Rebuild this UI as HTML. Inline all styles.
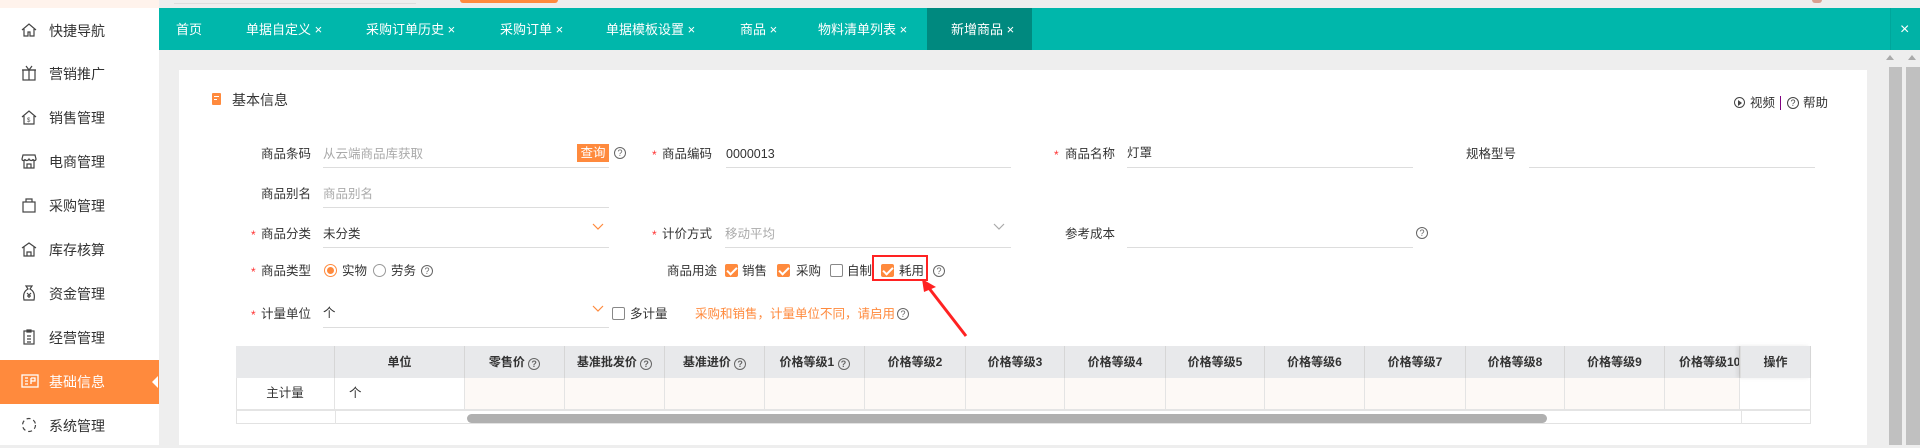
<!DOCTYPE html>
<html><head><meta charset="utf-8"><style>
*{margin:0;padding:0;box-sizing:border-box}
body{width:1920px;height:445px;overflow:hidden;background:#eee;font-family:"Liberation Sans","Noto Sans CJK SC",sans-serif;font-size:13px;color:#333;position:relative}
.a{position:absolute;white-space:nowrap;line-height:18px}
.side{left:0;top:0;width:159px;height:445px;background:#fff}
.si{left:0;width:159px;height:44px;line-height:44px;font-size:14px;color:#333}
.si span{position:absolute;left:49px}
.si svg{position:absolute;left:21px;top:13px}
.tabbar{left:159px;top:8px;width:1761px;height:42px;background:#00b7ab}
.tab{top:8px;height:42px;line-height:44px;color:#fff;font-size:13px}
.lbl{font-size:12.5px;color:#333}
.st{color:#f33;font-size:12px}
.line{height:1px;background:#ddd}
.ph{color:#aaa;font-size:12.5px}
.q{width:12px;height:12px;border:1px solid #666;border-radius:50%;font-size:9px;line-height:10px;text-align:center;color:#666}
.cb{width:13px;height:13px;border-radius:2px}
.cbo{background:#ff8a3d}
.cbe{border:1px solid #888;background:#fff}
.cbo:after{content:"";position:absolute;left:4px;top:1px;width:4px;height:8px;border:solid #fff;border-width:0 2px 2px 0;transform:rotate(45deg)}
.th{top:346px;height:32px;line-height:32px;text-align:center;font-weight:bold;font-size:12px;color:#333;background:#e8e9eb;border-right:1px solid #d6d6d6}
.td{top:378px;height:31px;background:#fdf9f6;border-right:1px solid #e4e4e4}
</style></head><body>
<div class="a" style="left:0;top:0;width:159px;height:8px;background:#fff3ec"></div>
<div class="a" style="left:174px;top:3px;width:242px;height:1px;background:#ddd"></div>
<div class="a" style="left:460px;top:0;width:98px;height:3px;background:#ff8a3d;border-radius:0 0 3px 3px"></div>
<div class="a" style="left:1812px;top:0;width:10px;height:3px;background:#d9a090;border-radius:0 0 5px 5px"></div>
<div class="a side" style="top:8px;height:437px"></div>
<div class="a si" style="top:9px"><svg width="16" height="16" viewBox="0 0 16 16" fill="none" stroke="#444" stroke-width="1.2"><path d="M1 8L8 2l7 6M3 7v7h4v-4h2v4h4V7"/></svg><span>快捷导航</span></div>
<div class="a si" style="top:52px"><svg width="16" height="16" viewBox="0 0 16 16" fill="none" stroke="#444" stroke-width="1.2"><rect x="2" y="5" width="12" height="10"/><path d="M1 5h14M8 5v10M5 1l3 4 3-4"/></svg><span>营销推广</span></div>
<div class="a si" style="top:96px"><svg width="16" height="16" viewBox="0 0 16 16" fill="none" stroke="#444" stroke-width="1.2"><path d="M1 8L8 2l7 6M3 7v8h10V7"/><text x="6" y="13" font-size="6" fill="#444" stroke="none">$</text></svg><span>销售管理</span></div>
<div class="a si" style="top:140px"><svg width="16" height="16" viewBox="0 0 16 16" fill="none" stroke="#444" stroke-width="1.2"><path d="M2 2h12l1 4c0 2-3 2-3 0 0 2-3 2-4 0-1 2-4 2-4 0 0 2-3 2-3 0zM3 8v7h10V8M6 15v-4h4v4"/></svg><span>电商管理</span></div>
<div class="a si" style="top:184px"><svg width="16" height="16" viewBox="0 0 16 16" fill="none" stroke="#444" stroke-width="1.2"><rect x="2" y="5" width="12" height="10"/><path d="M5 5V2h6v3"/></svg><span>采购管理</span></div>
<div class="a si" style="top:228px"><svg width="16" height="16" viewBox="0 0 16 16" fill="none" stroke="#444" stroke-width="1.2"><path d="M1 7L8 2l7 5M3 6v9h10V6M6 15v-4h4v4"/></svg><span>库存核算</span></div>
<div class="a si" style="top:272px"><svg width="16" height="16" viewBox="0 0 16 16" fill="none" stroke="#444" stroke-width="1.2"><path d="M5 1h6l-2 3c4 2 5 6 4 11H3C2 10 3 6 7 4z"/><path d="M6 8l2 2 2-2M8 10v3M6 11h4"/></svg><span>资金管理</span></div>
<div class="a si" style="top:316px"><svg width="16" height="16" viewBox="0 0 16 16" fill="none" stroke="#444" stroke-width="1.2"><rect x="3" y="2" width="10" height="13"/><path d="M6 1h4v2H6zM6 7h4M6 10h4M6 13h4"/></svg><span>经营管理</span></div>
<div class="a" style="left:0;top:360px;width:159px;height:44px;background:#ff8a3d"></div>
<div class="a" style="left:152px;top:376px;width:0;height:0;border:6px solid transparent;border-right-color:#fff;border-left:0"></div>
<div class="a si" style="top:360px;color:#fff"><svg width="18" height="16" viewBox="0 0 18 16" fill="none" stroke="#fff" stroke-width="1.3"><rect x="1" y="2" width="16" height="12"/><path d="M4 5h3M4 8h3M4 11h3M10 5v6M10 5h4v3h-4"/></svg><span>基础信息</span></div>
<div class="a si" style="top:404px"><svg width="16" height="16" viewBox="0 0 16 16" fill="none" stroke="#444" stroke-width="1.2" stroke-dasharray="4 3"><circle cx="8" cy="8" r="6.5"/></svg><span>系统管理</span></div>

<div class="a tabbar"></div>
<div class="a" style="left:927px;top:8px;width:105px;height:42px;background:#00897f"></div>
<div class="a" style="left:1890px;top:8px;width:30px;height:42px;background:#00b2a6;border-left:1px solid #00a69b"></div>
<div class="a tab" style="left:176px">首页</div>
<div class="a tab" style="left:246px">单据自定义 ×</div>
<div class="a tab" style="left:366px">采购订单历史 ×</div>
<div class="a tab" style="left:500px">采购订单 ×</div>
<div class="a tab" style="left:606px">单据模板设置 ×</div>
<div class="a tab" style="left:740px">商品 ×</div>
<div class="a tab" style="left:818px">物料清单列表 ×</div>
<div class="a tab" style="left:951px">新增商品 ×</div>
<div class="a tab" style="left:1900px;font-size:16px">×</div>

<div class="a" style="left:1886px;top:55px;border:4px solid transparent;border-bottom:5px solid #aaa;border-top:0"></div>
<div class="a" style="left:1908px;top:55px;border:4px solid transparent;border-bottom:5px solid #aaa;border-top:0"></div>
<div class="a" style="left:1889px;top:67px;width:13px;height:378px;background:#c0c0c0"></div>
<div class="a" style="left:1906px;top:67px;width:14px;height:378px;background:#c0c0c0"></div>

<div class="a" style="left:179px;top:70px;width:1688px;height:375px;background:#fff"></div>
<div class="a" style="left:212px;top:93px;width:9px;height:12px;background:#ff8a3d;border-radius:1px"></div>
<div class="a" style="left:214px;top:96px;width:5px;height:1px;background:#fff"></div>
<div class="a" style="left:214px;top:99px;width:3px;height:1px;background:#fff"></div>
<div class="a" style="left:232px;top:91px;font-size:14px;color:#333">基本信息</div>
<div class="a" style="left:1734px;top:97px;width:11px;height:11px;border:1px solid #444;border-radius:50%"></div>
<div class="a" style="left:1738px;top:100px;border:3px solid transparent;border-left:4px solid #444;border-right:0"></div>
<div class="a" style="left:1750px;top:94px;font-size:12.5px">视频</div>
<div class="a" style="left:1780px;top:96px;width:1px;height:14px;background:#800080"></div>
<div class="a q" style="left:1787px;top:97px;border-color:#444;color:#444">?</div>
<div class="a" style="left:1803px;top:94px;font-size:12.5px">帮助</div>

<div class="a lbl" style="left:261px;top:145px">商品条码</div>
<div class="a ph" style="left:323px;top:145px">从云端商品库获取</div>
<div class="a" style="left:577px;top:144px;width:32px;height:18px;background:#ff8a3d;color:#fff;font-size:12.5px;line-height:18px;text-align:center">查询</div>
<div class="a line" style="left:323px;top:167px;width:286px"></div>
<div class="a q" style="left:614px;top:147px">?</div>
<div class="a st" style="left:652px;top:146px">*</div>
<div class="a lbl" style="left:662px;top:145px">商品编码</div>
<div class="a lbl" style="left:726px;top:145px">0000013</div>
<div class="a line" style="left:726px;top:167px;width:285px"></div>
<div class="a st" style="left:1054px;top:146px">*</div>
<div class="a lbl" style="left:1065px;top:145px">商品名称</div>
<div class="a lbl" style="left:1127px;top:144px">灯罩</div>
<div class="a line" style="left:1127px;top:167px;width:286px"></div>
<div class="a lbl" style="left:1466px;top:145px">规格型号</div>
<div class="a line" style="left:1529px;top:167px;width:286px"></div>
<div class="a lbl" style="left:261px;top:185px">商品别名</div>
<div class="a ph" style="left:323px;top:185px">商品别名</div>
<div class="a line" style="left:323px;top:207px;width:286px"></div>
<div class="a st" style="left:251px;top:226px">*</div>
<div class="a lbl" style="left:261px;top:225px">商品分类</div>
<div class="a lbl" style="left:323px;top:225px">未分类</div>
<svg class="a" style="left:592px;top:223px" width="12" height="8"><path d="M1 1l5 5 5-5" fill="none" stroke="#ff8a3d" stroke-width="1.2"/></svg>
<div class="a line" style="left:323px;top:247px;width:286px"></div>
<div class="a st" style="left:652px;top:226px">*</div>
<div class="a lbl" style="left:662px;top:225px">计价方式</div>
<div class="a ph" style="left:725px;top:225px">移动平均</div>
<svg class="a" style="left:993px;top:223px" width="12" height="8"><path d="M1 1l5 5 5-5" fill="none" stroke="#aaa" stroke-width="1.2"/></svg>
<div class="a line" style="left:725px;top:247px;width:286px"></div>
<div class="a lbl" style="left:1065px;top:225px">参考成本</div>
<div class="a line" style="left:1127px;top:247px;width:286px"></div>
<div class="a q" style="left:1416px;top:227px">?</div>
<div class="a st" style="left:251px;top:263px">*</div>
<div class="a lbl" style="left:261px;top:262px">商品类型</div>
<div class="a" style="left:324px;top:264px;width:13px;height:13px;border:1px solid #ff8a3d;border-radius:50%"></div>
<div class="a" style="left:327px;top:267px;width:7px;height:7px;background:#ff8a3d;border-radius:50%"></div>
<div class="a lbl" style="left:342px;top:262px">实物</div>
<div class="a" style="left:373px;top:264px;width:13px;height:13px;border:1px solid #999;border-radius:50%"></div>
<div class="a lbl" style="left:391px;top:262px">劳务</div>
<div class="a q" style="left:421px;top:265px">?</div>
<div class="a lbl" style="left:667px;top:262px">商品用途</div>
<div class="a cb cbo" style="left:725px;top:264px"></div><div class="a lbl" style="left:742px;top:262px">销售</div>
<div class="a cb cbo" style="left:777px;top:264px"></div><div class="a lbl" style="left:796px;top:262px">采购</div>
<div class="a cb cbe" style="left:830px;top:264px"></div><div class="a lbl" style="left:847px;top:262px">自制</div>
<div class="a cb cbo" style="left:881px;top:264px"></div><div class="a lbl" style="left:899px;top:262px">耗用</div>
<div class="a q" style="left:933px;top:265px">?</div>
<div class="a" style="left:872px;top:255px;width:56px;height:26px;border:2px solid #f22"></div>
<svg class="a" style="left:900px;top:270px" width="80" height="75"><path d="M66 66L25 13" stroke="#f22" stroke-width="3"/><path d="M22 9l14 8-12 5z" fill="#f22"/></svg>
<div class="a st" style="left:251px;top:306px">*</div>
<div class="a lbl" style="left:261px;top:305px">计量单位</div>
<div class="a lbl" style="left:323px;top:304px">个</div>
<svg class="a" style="left:592px;top:305px" width="12" height="8"><path d="M1 1l5 5 5-5" fill="none" stroke="#ff8a3d" stroke-width="1.2"/></svg>
<div class="a line" style="left:323px;top:327px;width:286px"></div>
<div class="a cb cbe" style="left:612px;top:307px"></div>
<div class="a lbl" style="left:630px;top:305px">多计量</div>
<div class="a" style="left:695px;top:305px;color:#ff8a3d;font-size:12.5px">采购和销售，计量单位不同，请启用</div>
<div class="a q" style="left:897px;top:308px">?</div>
<div class="a" style="left:236px;top:346px;width:1575px;height:78px;border:1px solid #e2e2e2;border-top:0;background:#fff"></div>
<div class="a th" style="left:236px;width:99px"></div>
<div class="a th" style="left:335px;width:130px">单位</div>
<div class="a th" style="left:465px;width:100px">零售价 <span class="q" style="display:inline-block;position:relative;top:1px">?</span></div>
<div class="a th" style="left:565px;width:100px">基准批发价 <span class="q" style="display:inline-block;position:relative;top:1px">?</span></div>
<div class="a th" style="left:665px;width:100px">基准进价 <span class="q" style="display:inline-block;position:relative;top:1px">?</span></div>
<div class="a th" style="left:765px;width:100px">价格等级1 <span class="q" style="display:inline-block;position:relative;top:1px">?</span></div>
<div class="a th" style="left:865px;width:101px">价格等级2</div>
<div class="a th" style="left:966px;width:99px">价格等级3</div>
<div class="a th" style="left:1065px;width:101px">价格等级4</div>
<div class="a th" style="left:1166px;width:99px">价格等级5</div>
<div class="a th" style="left:1265px;width:100px">价格等级6</div>
<div class="a th" style="left:1365px;width:101px">价格等级7</div>
<div class="a th" style="left:1466px;width:99px">价格等级8</div>
<div class="a th" style="left:1565px;width:100px">价格等级9</div>
<div class="a th" style="left:1665px;width:75px;overflow:hidden;text-align:left;padding-left:14px">价格等级10</div>
<div class="a th" style="left:1740px;width:71px;border-left:1px solid #ddd;box-shadow:-3px 0 4px rgba(0,0,0,.08)">操作</div>
<div class="a" style="left:236px;top:378px;width:99px;height:31px;border-right:1px solid #e4e4e4;text-align:center;line-height:31px;font-size:12.5px">主计量</div>
<div class="a" style="left:335px;top:378px;width:130px;height:31px;border-right:1px solid #e4e4e4;line-height:31px;padding-left:14px;font-size:12.5px">个</div>
<div class="a td" style="left:465px;width:100px"></div><div class="a td" style="left:565px;width:100px"></div>
<div class="a td" style="left:665px;width:100px"></div><div class="a td" style="left:765px;width:100px"></div>
<div class="a td" style="left:865px;width:101px"></div><div class="a td" style="left:966px;width:99px"></div>
<div class="a td" style="left:1065px;width:101px"></div><div class="a td" style="left:1166px;width:99px"></div>
<div class="a td" style="left:1265px;width:100px"></div><div class="a td" style="left:1365px;width:101px"></div>
<div class="a td" style="left:1466px;width:99px"></div><div class="a td" style="left:1565px;width:100px"></div>
<div class="a td" style="left:1665px;width:75px"></div>
<div class="a" style="left:236px;top:409px;width:1575px;height:2px;background:#e4e4e4"></div>
<div class="a" style="left:335px;top:411px;width:1px;height:13px;background:#e4e4e4"></div>
<div class="a" style="left:1741px;top:411px;width:1px;height:13px;background:#e4e4e4"></div>
<div class="a" style="left:467px;top:414px;width:1080px;height:9px;background:#b0b0b0;border-radius:5px"></div>
</body></html>
